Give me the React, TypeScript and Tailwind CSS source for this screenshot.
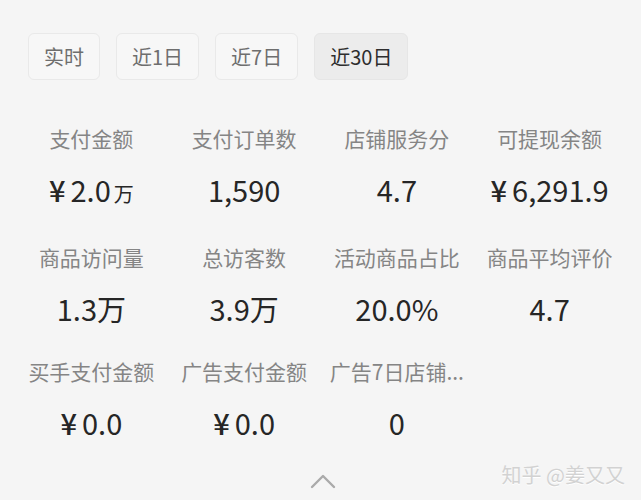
import React from "react";

type Metric = {
  label: string;
  value: React.ReactNode;
};

const RANGES = ["实时", "近1日", "近7日", "近30日"] as const;

function Yuan({ children }: { children: React.ReactNode }) {
  return (
    <>
      <span className="mr-[5px] font-medium">¥</span>
      {children}
    </>
  );
}

const METRICS: Metric[] = [
  {
    label: "支付金额",
    value: (
      <Yuan>
        2.0<span className="ml-[3px] text-[20px]">万</span>
      </Yuan>
    ),
  },
  { label: "支付订单数", value: "1,590" },
  { label: "店铺服务分", value: "4.7" },
  { label: "可提现余额", value: <Yuan>6,291.9</Yuan> },
  { label: "商品访问量", value: "1.3万" },
  { label: "总访客数", value: "3.9万" },
  { label: "活动商品占比", value: "20.0%" },
  { label: "商品平均评价", value: "4.7" },
  { label: "买手支付金额", value: <Yuan>0.0</Yuan> },
  { label: "广告支付金额", value: <Yuan>0.0</Yuan> },
  { label: "广告7日店铺...", value: "0" },
];

export default function App() {
  const active = "近30日";

  return (
    <div
      className="relative h-[500px] w-[641px] overflow-hidden bg-[#f5f5f5]"
      style={{ fontFamily: '"Noto Sans CJK SC", "Noto Sans", sans-serif' }}
    >
      {/* time range tabs */}
      <div className="flex gap-4 pl-[28px] pt-[33px]">
        {RANGES.map((r) => (
          <button
            key={r}
            className={
              r === active
                ? "h-[47px] rounded-md border border-[#e6e6e6] bg-[#ececec] px-[15px] text-[20px] leading-none text-[#2e2e2e]"
                : "h-[47px] rounded-md border border-[#e9e9e9] bg-[#f7f7f7] px-[15px] text-[20px] leading-none text-[#6e6e6e]"
            }
          >
            {r}
          </button>
        ))}
      </div>

      {/* metric grid */}
      <div className="mx-[15px] mt-[44px] grid grid-cols-4 gap-y-[31px]">
        {METRICS.map((m) => (
          <div key={m.label} className="flex flex-col items-center">
            <div className="whitespace-nowrap text-[21px] leading-[28px] text-[#858585]">
              {m.label}
            </div>
            <div className="mt-[19px] whitespace-nowrap text-[29px] leading-[36px] text-[#262626]">
              {m.value}
            </div>
          </div>
        ))}
      </div>

      {/* collapse toggle */}
      <div className="mt-[33px] flex justify-center pl-[5px]">
        <svg width="26" height="16" viewBox="0 0 26 16" fill="none">
          <polyline
            points="2,14 13,3 24,14"
            stroke="#aaaaaa"
            strokeWidth="2.4"
            strokeLinecap="round"
            strokeLinejoin="round"
          />
        </svg>
      </div>

      <div className="absolute bottom-[15px] right-[16px] text-[20px] leading-none text-[#d2d2d2] [text-shadow:0_1px_0_#ffffff]">
        知乎 @姜又又
      </div>
    </div>
  );
}
